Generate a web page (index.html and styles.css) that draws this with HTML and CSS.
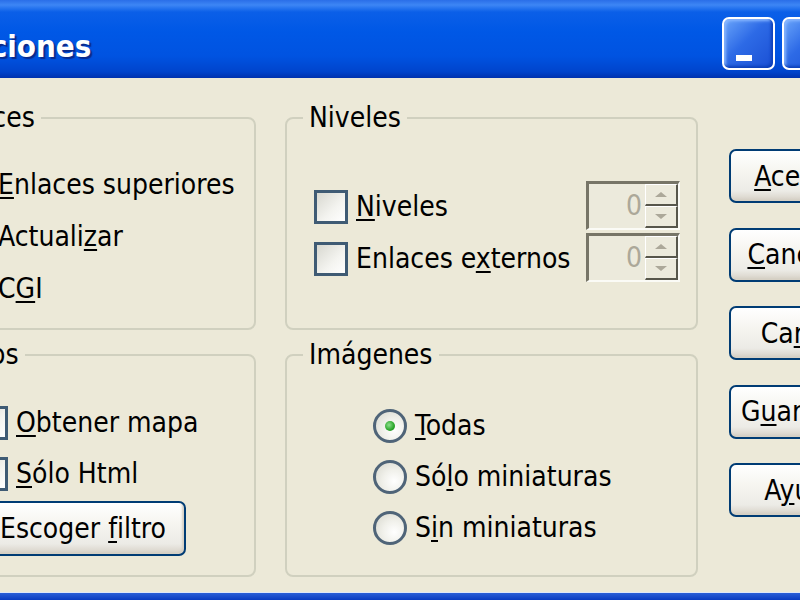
FILE: index.html
```html
<!DOCTYPE html>
<html lang="es">
<head>
    <meta charset="UTF-8">
    <title>Opciones</title>
    <link rel="stylesheet" href="styles.css">
</head>
<body>
    <div class="window">
        <div class="titlebar">
            <span class="title">Opciones</span>
            <div class="title-buttons">
                <span class="tb-btn minimize"></span>
                <span class="tb-btn close"></span>
            </div>
        </div>
        <div class="content">
            <div class="col col-left">
                <fieldset class="group">
                    <legend>Enlaces</legend>
                    <div class="group-body links-body">
                        <label class="row"><span class="check"></span><span><u>E</u>nlaces superiores</span></label>
                        <label class="row"><span class="check"></span><span>Actuali<u>z</u>ar</span></label>
                        <label class="row"><span class="check"></span><span>C<u>G</u>I</span></label>
                    </div>
                </fieldset>
                <fieldset class="group">
                    <legend class="legend-wide">Filtros</legend>
                    <div class="group-body filter-body">
                        <label class="row row-sm"><span class="check"></span><span><u>O</u>btener mapa</span></label>
                        <label class="row row-sm"><span class="check"></span><span><u>S</u>ólo Html</span></label>
                        <button class="btn btn-filter">Escoger <u>f</u>iltro</button>
                    </div>
                </fieldset>
            </div>
            <div class="col col-mid">
                <fieldset class="group">
                    <legend>Niveles</legend>
                    <div class="group-body levels-body">
                        <div class="row">
                            <span class="check"></span><span><u>N</u>iveles</span>
                            <span class="spinner"><span class="spin-value">0</span><span class="spin-buttons"><span class="spin-up"></span><span class="spin-down"></span></span></span>
                        </div>
                        <div class="row">
                            <span class="check"></span><span>Enlaces e<u>x</u>ternos</span>
                            <span class="spinner"><span class="spin-value">0</span><span class="spin-buttons"><span class="spin-up"></span><span class="spin-down"></span></span></span>
                        </div>
                    </div>
                </fieldset>
                <fieldset class="group">
                    <legend>Imágenes</legend>
                    <div class="group-body images-body">
                        <label class="row row-sm"><span class="radio checked"></span><span><u>T</u>odas</span></label>
                        <label class="row row-sm"><span class="radio"></span><span>Só<u>l</u>o miniaturas</span></label>
                        <label class="row row-sm"><span class="radio"></span><span>S<u>i</u>n miniaturas</span></label>
                    </div>
                </fieldset>
            </div>
            <div class="col col-right">
                <button class="btn"><u>A</u>ceptar</button>
                <button class="btn"><u>C</u>ancelar</button>
                <button class="btn">Ca<u>r</u>gar</button>
                <button class="btn">G<u>u</u>ardar...</button>
                <button class="btn">A<u>y</u>uda</button>
            </div>
        </div>
        <div class="frame-bottom"></div>
    </div>
</body>
</html>
```

FILE: styles.css
```css
body {
    margin: 0;
    overflow: hidden;
    background-color: #ece9d8;
    font-family: "DejaVu Sans Condensed", "Liberation Sans", sans-serif;
    font-size: 28px;
    color: #000;
}
.window {
    width: 1040px;
    margin-left: -110px; /* Fenster ist links abgeschnitten */
}
.titlebar {
    display: flex;
    height: 78px;
    padding: 0 95px 0 57px;
    box-sizing: border-box;
    background: linear-gradient(180deg, #2a6ee8 0, #3d86f5 5px, #0b5fe8 12px, #0058e6 40%, #0053e1 72%, #0044cc 92%, #0032ae 100%);
}
.title {
    flex: 1;
    padding-top: 26px;
    font-weight: bold;
    font-size: 31px;
    line-height: 40px;
    color: #fff;
    text-shadow: 2px 2px 1px #0a2a8c;
}
.title-buttons {
    display: flex;
    gap: 7px;
    margin-top: 17px;
}
.tb-btn {
    position: relative;
    width: 53px;
    height: 53px;
    box-sizing: border-box;
    border: 2px solid #fff;
    border-radius: 7px;
    background: linear-gradient(135deg, #6aa5fb 0, #2d6ae6 45%, #1a4fd4 100%);
    box-shadow: inset -2px -2px 3px #0b3fb8, inset 2px 2px 3px #8ab8ff;
}
.minimize::after {
    content: "";
    position: absolute;
    left: 12px;
    bottom: 7px;
    width: 16px;
    height: 6px;
    background: #fff;
}
.content {
    display: flex;
    height: 514px;
    padding: 24px 0 0 24px;
    box-sizing: border-box;
}
.col {
    flex: none;
    display: flex;
    flex-direction: column;
    gap: 9px;
}
.col-left {
    width: 342px;
}
.col-mid {
    width: 413px;
    margin-left: 29px;
}
.col-right {
    width: 200px;
    margin-left: 31px;
    padding-top: 47px;
    gap: 24.5px;
}
.group {
    margin: 0;
    padding: 0;
    min-width: 0;
    border: 2px solid #d0d0bf;
    border-radius: 8px;
}
.group legend {
    margin-left: 16px;
    padding: 0 6px;
    line-height: 32px;
}
.group .legend-wide {
    margin-left: 22px;
}
.group-body {
    box-sizing: border-box;
    height: 194px;
}
.links-body {
    padding: 24px 0 0 40px;
}
.levels-body {
    padding: 47px 16px 0 27px;
}
.filter-body {
    height: 204px;
    padding: 26px 0 0 58px;
}
.images-body {
    height: 204px;
    padding: 29px 0 0 86px;
}
.row {
    display: flex;
    align-items: center;
    gap: 8px;
    height: 52px;
    white-space: nowrap;
}
.row-sm {
    height: 51px;
}
.levels-body .row {
    align-items: flex-start;
}
.levels-body .check {
    margin-top: 9px;
}
.levels-body .row > span:nth-child(2) {
    line-height: 52px;
}
u {
    text-decoration-thickness: 2px;
    text-underline-offset: 3px;
}
.check {
    flex: none;
    width: 34px;
    height: 34px;
    box-sizing: border-box;
    border: 3px solid #3f5b74;
    background: linear-gradient(135deg, #d8d8d0 0, #f4f4f0 60%, #fff 100%);
}
.radio {
    flex: none;
    position: relative;
    width: 34px;
    height: 34px;
    box-sizing: border-box;
    border: 3px solid #4f6478;
    border-radius: 50%;
    background: radial-gradient(circle at 65% 65%, #fff 0, #f0f0ea 45%, #d6d6cc 100%);
}
.radio.checked::after {
    content: "";
    position: absolute;
    left: 9px;
    top: 9px;
    width: 10px;
    height: 10px;
    border-radius: 50%;
    background: radial-gradient(circle at 40% 40%, #8ee08e 0, #2aa52a 60%, #1d8a1d 100%);
}
.spinner {
    display: flex;
    margin-left: auto;
    width: 94px;
    height: 49px;
    box-sizing: border-box;
    border-top: 3px solid #777567;
    border-left: 3px solid #777567;
    border-right: 2px solid #fbfbf6;
    border-bottom: 2px solid #fbfbf6;
    background-color: #eceadc;
}
.spin-value {
    flex: 1;
    text-align: right;
    padding-right: 3px;
    line-height: 44px;
    color: #aca899;
}
.spin-buttons {
    display: flex;
    flex-direction: column;
    width: 33px;
}
.spin-up, .spin-down {
    flex: 1;
    display: flex;
    align-items: center;
    justify-content: center;
    border-top: 1px solid #fff;
    border-left: 1px solid #fff;
    border-right: 2px solid #57564b;
    border-bottom: 2px solid #57564b;
}
.spin-up::after, .spin-down::after {
    content: "";
    border-left: 6px solid transparent;
    border-right: 6px solid transparent;
}
.spin-up::after {
    border-bottom: 5px solid #aca899;
}
.spin-down::after {
    border-top: 5px solid #aca899;
}
.btn {
    flex: none;
    height: 54px;
    padding: 0;
    font: inherit;
    color: #000;
    border: 2px solid #003c74;
    border-radius: 7px;
    background: linear-gradient(180deg, #fff 0, #f6f5f0 40%, #ecebe6 80%, #d6d0c5 100%);
    box-shadow: inset -2px -2px 2px #d6d0c5;
}
.col-right .btn {
    width: 148px;
}
.btn-filter {
    width: 206px;
    height: 55px;
    margin: 2px 0 0 6px;
}
.frame-bottom {
    height: 8px;
    background: linear-gradient(180deg, #dfe7f7 0, #dfe7f7 1px, #2a5fd8 1px, #0a3bc0 100%);
}
```
